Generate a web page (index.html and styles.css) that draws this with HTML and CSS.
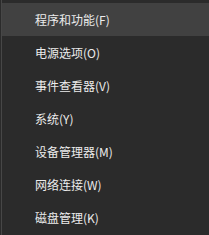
FILE: index.html
```html
<!DOCTYPE html>
<html>
<head>
<meta charset="utf-8">
<link rel="stylesheet" href="styles.css">
</head>
<body>
<div class="menu">
  <div class="item active">程序和功能(F)</div>
  <div class="item">电源选项(O)</div>
  <div class="item">事件查看器(V)</div>
  <div class="item">系统(Y)</div>
  <div class="item">设备管理器(M)</div>
  <div class="item">网络连接(W)</div>
  <div class="item">磁盘管理(K)</div>
</div>
</body>
</html>
```
FILE: styles.css
```css
html, body {
  margin: 0;
  padding: 0;
  background: #2b2b2b;
}
.menu {
  width: 209px;
  height: 235px;
  box-sizing: border-box;
  padding-top: 3px;
  border-left: 1px solid #2b2b2b;
  background: #2b2b2b;
  box-shadow: inset 1px 0 0 #474747;
  font-family: "Microsoft YaHei", "Noto Sans CJK SC", sans-serif;
  font-size: 12px;
  color: #ececec;
}
.item {
  height: 33px;
  line-height: 33px;
  padding-left: 34px;
  white-space: nowrap;
}
.item.active {
  background: #414141;
  margin-left: 1px;
  padding-left: 33px;
}
```
